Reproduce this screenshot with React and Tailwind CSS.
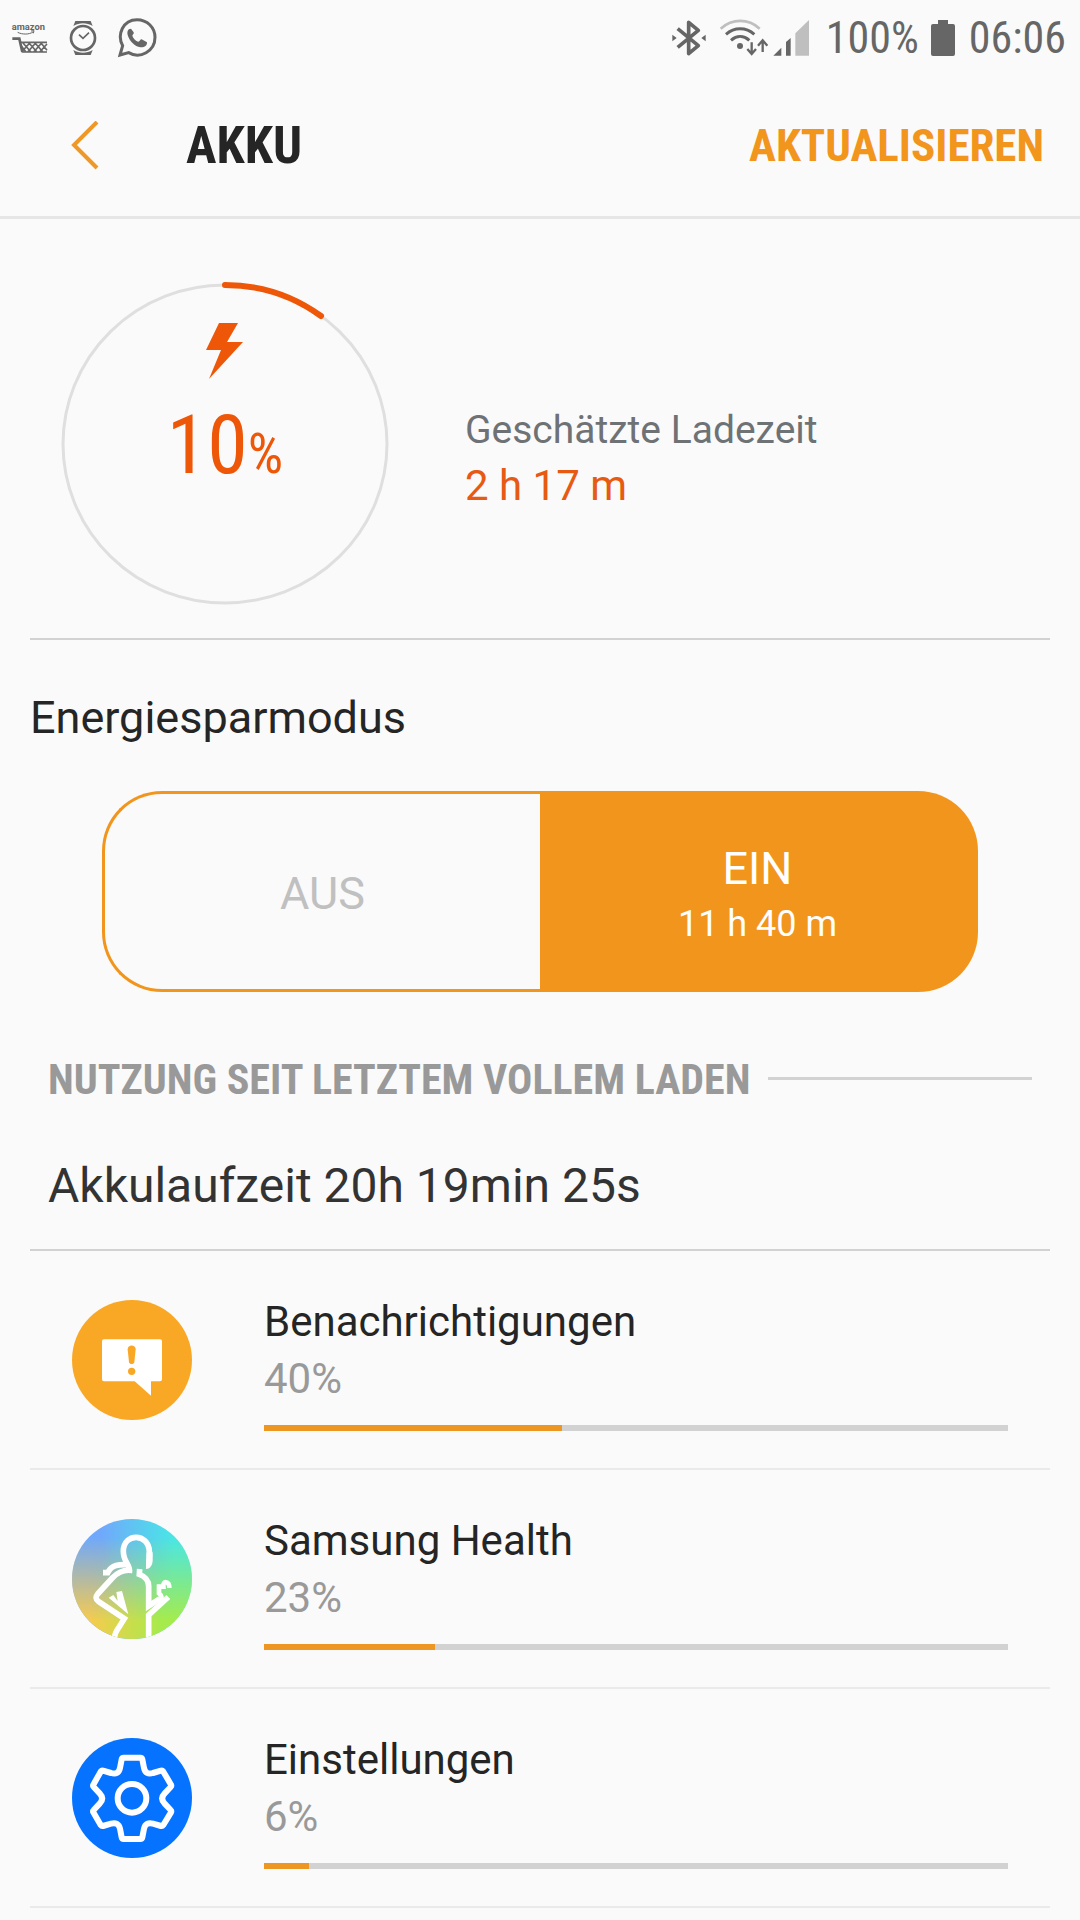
import { useState } from "react";

const usage = [
    { name: "Benachrichtigungen", percent: 40, Icon: NotificationIcon },
    { name: "Samsung Health", percent: 23, Icon: HealthIcon },
    { name: "Einstellungen", percent: 6, Icon: SettingsIcon },
];

function CartIcon() {
    return (
        <svg width="38" height="32" viewBox="0 0 114 96" fill="none">
            <text x="2" y="25" fontFamily="Roboto, sans-serif" fontWeight="700" fontSize="28" fill="#666">amazon</text>
            <path d="M20 31c14 7 34 7 46-1M60 27l9-1-2 8" stroke="#666" strokeWidth="3" />
            <path d="M4 50h21l9 40" stroke="#666" strokeWidth="8" />
            <path d="M26 61h82M32 90l24-27M50 90l24-27M68 90l24-27M86 90l22-24M36 63l24 27M54 63l24 27M72 63l24 27M90 63l18 22M31 72l14 18M32 90h76" stroke="#666" strokeWidth="5" />
        </svg>
    );
}

function WatchIcon() {
    return (
        <svg width="28" height="36" viewBox="0 0 84 108" fill="none">
            <path d="M19 3h46l6 15C53 7 31 7 13 18zM19 105h46l6-15c-18 11-40 11-58 0z" fill="#666" />
            <circle cx="42" cy="54" r="36" stroke="#666" strokeWidth="8" />
            <path d="M30 44l12 11 18-17" stroke="#666" strokeWidth="5" />
        </svg>
    );
}

function WhatsAppIcon() {
    return (
        <svg width="40" height="40" viewBox="0 0 120 120" fill="none">
            <path d="M9 111l8-28C-1 50 18 5 60 5c30 0 54 23 54 53 0 42-45 66-79 46z" stroke="#666" strokeWidth="9" strokeLinejoin="miter" />
            <path d="M42 32c-10 0-13 10-9 22 6 16 20 31 37 34 12 1 21-5 20-15l-16-9c-4-1-6 8-11 7-8-3-15-11-17-18 1-4 6-5 4-10z" fill="#666" />
        </svg>
    );
}

function BluetoothIcon() {
    return (
        <svg width="36" height="40" viewBox="0 0 108 120" fill="none">
            <path d="M20 32l62 51-29 24V13l29 24-62 51" stroke="#666" strokeWidth="11" strokeLinejoin="round" />
            <path d="M4 50l13 10-13 10zM104 50L91 60l13 10z" fill="#666" />
        </svg>
    );
}

function WifiIcon() {
    return (
        <svg width="50" height="38" viewBox="0 0 150 114" fill="none">
            <path d="M5 29c35-31 83-31 117 0" stroke="#bfbfbf" strokeWidth="8" />
            <path d="M21 46c25-22 60-22 85 0M36 64c17-15 38-15 55 0" stroke="#666" strokeWidth="9" />
            <circle cx="63" cy="81" r="9" fill="#666" />
            <path d="M98 70v32M85 90l13 15 13-15M131 99V64M117 80l14-16 14 16" stroke="#666" strokeWidth="7" />
        </svg>
    );
}

function SignalIcon() {
    return (
        <svg width="37" height="38" viewBox="0 0 111 114">
            <path d="M1 110l24-24v24zM39 110V69l14-12v53z" fill="#666" />
            <path d="M67 110V43l41-40v107z" fill="#bfbfbf" />
        </svg>
    );
}

function BatteryIcon() {
    return (
        <svg width="24" height="36" viewBox="0 0 24 36" fill="#666">
            <path d="M7 0h10v4h5q2 0 2 2v28q0 2-2 2H2q-2 0-2-2V6q0-2 2-2h5z" />
        </svg>
    );
}

function NotificationIcon() {
    return (
        <svg className="size-30" viewBox="36 30 360 360">
            <circle cx="216" cy="210" r="180" fill="#f9a826" />
            <path d="M132 148h168q6 0 6 6v114q0 6-6 6h-27v43l-49-43h-92q-6 0-6-6V154q0-6 6-6z" fill="#fff" />
            <path d="M203 178c0-15 24-15 24 0l-4 39c-1 7-15 7-16 0z" fill="#f9a826" />
            <circle cx="215" cy="244" r="11" fill="#f9a826" />
        </svg>
    );
}

function HealthIcon() {
    return (
        <svg className="size-30" viewBox="36 40 360 360">
            <defs>
                <linearGradient id="healthTop" x1="0" y1="0" x2="1" y2="0">
                    <stop offset="0.25" stopColor="#70a9fb" />
                    <stop offset="0.85" stopColor="#49e7e6" />
                </linearGradient>
                <linearGradient id="healthBottom" x1="0" y1="0" x2="1" y2="0">
                    <stop offset="0.15" stopColor="#f7cb4d" />
                    <stop offset="0.75" stopColor="#a6eb4b" />
                </linearGradient>
                <linearGradient id="healthFade" x1="0" y1="0" x2="0" y2="1">
                    <stop offset="0.15" stopColor="#000" />
                    <stop offset="0.85" stopColor="#fff" />
                </linearGradient>
                <mask id="healthMask">
                    <rect x="36" y="40" width="360" height="360" fill="url(#healthFade)" />
                </mask>
                <clipPath id="healthClip">
                    <circle cx="216" cy="220" r="180" />
                </clipPath>
            </defs>
            <circle cx="216" cy="220" r="180" fill="url(#healthTop)" />
            <circle cx="216" cy="220" r="180" fill="url(#healthBottom)" mask="url(#healthMask)" />
            <g clipPath="url(#healthClip)" fill="none" stroke="#fff" strokeWidth="17">
                <path d="M129 201h14c12-25 35-25 61-24" />
                <path d="M208 201c6-22-18-29-18-64 0-56 76-56 78 0v18" />
                <path d="M260 140h18v23c0 17-9 27-20 27v-24z" fill="#fff" stroke="none" />
                <path d="M211 194c-26-2-41 9-54 23l-44 48c-7 8-6 16 2 22l78 52-19 30c-6 8-10 18-12 32" />
                <path d="M146 276l14-8 13 18-4-27 17-3 19 70z" fill="#fff" stroke="none" />
                <path d="M239 190l-1 16c19 7 28 18 28 36v59l34-22" />
                <path d="M296 285c12-8 10-15 1-22v-20h13c-2-19 18-18 18 4" strokeWidth="14" />
                <path d="M325 274l-59 54v75" />
            </g>
        </svg>
    );
}

function SettingsIcon() {
    return (
        <svg className="size-30" viewBox="36 40 360 360">
            <circle cx="216" cy="220" r="180" fill="#0573ff" />
            <g fill="none" stroke="#fff" strokeWidth="18" strokeLinejoin="round">
                <circle cx="216" cy="221" r="43" />
                <path d="M191 99h50q5 0 6 5l5 26q5 22 27 15l24-7q4-1 7 3l23 39q2 4-1 7l-18 19q-15 16 0 31l18 19q3 3 1 7l-23 38q-3 4-7 3l-24-7q-22-6-27 15l-5 26q-1 5-6 5h-50q-5 0-6-5l-5-26q-5-21-27-15l-24 7q-4 1-7-3l-22-38q-2-4 1-7l18-19q15-15 0-31l-18-19q-3-3-1-7l22-39q3-4 7-3l24 7q22 7 27-15l5-26q1-5 6-5z" />
            </g>
        </svg>
    );
}

function StatusBar() {
    return (
        <div className="flex h-[76px] items-center justify-between pl-[11px] pr-3.5 font-['Roboto_Condensed','Roboto',sans-serif] text-[44px] leading-none text-[#666]">
            <div className="flex items-center gap-5">
                <CartIcon />
                <WatchIcon />
                <WhatsAppIcon />
            </div>
            <div className="flex items-center">
                <BluetoothIcon />
                <div className="ml-3 flex gap-1">
                    <WifiIcon />
                    <SignalIcon />
                </div>
                <span className="ml-4">100%</span>
                <span className="ml-3 mr-3.5">
                    <BatteryIcon />
                </span>
                <span>06:06</span>
            </div>
        </div>
    );
}

function Gauge() {
    return (
        <div className="relative w-[328px] shrink-0">
            <svg width="328" height="324" viewBox="0 0 328 324" fill="none">
                <ellipse cx="164" cy="162" rx="162" ry="159" stroke="#dfdfdf" strokeWidth="3" />
                <path d="M164 3a162 159 0 0 1 96 31" stroke="#ee5708" strokeWidth="6" strokeLinecap="round" />
                <path d="M158 41h19l-11 19h16l-34 37 12-29h-15z" fill="#ee5708" />
            </svg>
            <div className="absolute inset-0 flex items-baseline justify-center pt-[113px] font-['Roboto_Condensed','Roboto',sans-serif] text-[82px] leading-[100px] text-[#ee5708]">
                10<span className="text-[56px]">%</span>
            </div>
        </div>
    );
}

export default function App() {
    const [saving, setSaving] = useState(true);

    return (
        <div className="min-h-screen bg-[#fafafa] font-['Roboto',sans-serif] text-[#252525]">
            <StatusBar />

            <header className="flex h-[143px] items-center border-b-3 border-[#e6e6e6] pl-[71px] pr-9 font-['Roboto_Condensed','Roboto',sans-serif] font-bold">
                <button aria-label="Zurück">
                    <svg width="30" height="50" viewBox="0 0 30 50" fill="none">
                        <path d="M26 1L3 24l23 23" stroke="#ee9827" strokeWidth="4" />
                    </svg>
                </button>
                <h1 className="ml-[85px] text-[51px]">AKKU</h1>
                <button className="ml-auto text-[45px] text-[#f2951d]">AKTUALISIEREN</button>
            </header>

            <main className="px-[30px]">
                <section className="flex items-center border-b-2 border-[#d2d2d2] pb-8 pl-[31px] pt-[63px]">
                    <Gauge />
                    <div className="ml-[76px] pt-7 leading-[55px]">
                        <p className="text-[39px] text-[#6f7275]">Geschätzte Ladezeit</p>
                        <p className="text-[42px] text-[#e65a14]">2 h 17 m</p>
                    </div>
                </section>

                <section className="pt-12">
                    <h2 className="text-[45px] leading-[60px]">Energiesparmodus</h2>
                    <div className="mx-[72px] mt-[43px] flex h-[201px] text-[45px]">
                        <button
                            aria-pressed={!saving}
                            className={`flex-1 rounded-l-[60px] border-3 border-r-0 border-[#f2951d] pt-1 ${saving ? "text-[#c0c0c0]" : "bg-[#f2951d] text-white"}`}
                            onClick={() => setSaving(false)}
                        >
                            AUS
                        </button>
                        <button
                            aria-pressed={saving}
                            className={`flex flex-1 flex-col items-center justify-center rounded-r-[60px] border-3 border-l-0 border-[#f2951d] pt-2 leading-[56px] ${saving ? "bg-[#f2951d] text-white" : "text-[#c0c0c0]"}`}
                            onClick={() => setSaving(true)}
                        >
                            EIN
                            <span className="text-[36px] leading-[54px]">11 h 40 m</span>
                        </button>
                    </div>
                </section>

                <section className="border-b-2 border-[#d2d2d2] px-[18px] pb-[33px] pt-[58px]">
                    <div className="flex items-center gap-[18px]">
                        <h2 className="font-['Roboto_Condensed','Roboto',sans-serif] text-[42px] font-bold leading-[60px] text-[#999]">
                            NUTZUNG SEIT LETZTEM VOLLEM LADEN
                        </h2>
                        <div className="mb-1 h-[3px] flex-1 bg-[#d2d2d2]" />
                    </div>
                    <p className="mt-[46px] text-[48px] leading-[60px] text-[#333]">Akkulaufzeit 20h 19min 25s</p>
                </section>

                <ul>
                    {usage.map(({ name, percent, Icon }) => (
                        <li key={name} className="flex items-start border-b-2 border-[#eaeaea] pb-[37px] pl-[42px] pr-[42px] pt-[42px]">
                            <div className="mt-[7px]">
                                <Icon />
                            </div>
                            <div className="ml-[72px] flex-1 text-[42px] leading-[57px]">
                                <h3>{name}</h3>
                                <p className="text-[#999]">{percent}%</p>
                                <div role="progressbar" aria-label={name} aria-valuenow={percent} className="mt-[18px] h-[6px] bg-[#d2d2d2]">
                                    <div className="h-full bg-[#ee9622]" style={{ width: `${percent}%` }} />
                                </div>
                            </div>
                        </li>
                    ))}
                </ul>
            </main>
        </div>
    );
}
